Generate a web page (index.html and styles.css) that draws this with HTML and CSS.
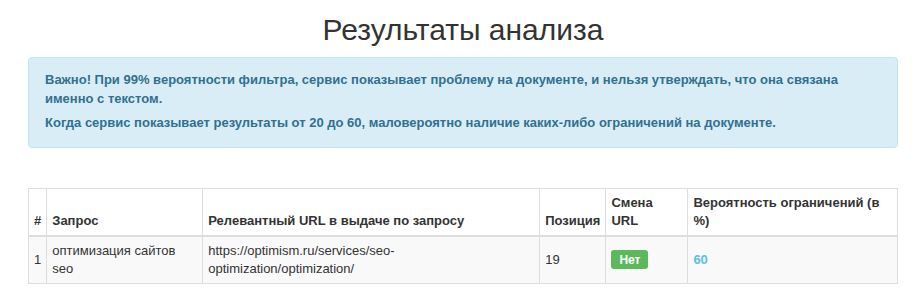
FILE: index.html
```html
<!DOCTYPE html>
<html lang="ru">
<head>
    <meta charset="utf-8">
    <title>Результаты анализа</title>
    <link rel="stylesheet" href="styles.css">
</head>
<body>
    <main class="container">
        <h1 class="page-title">Результаты анализа</h1>

        <div class="alert alert-info">
            <p>Важно! При 99% вероятности фильтра, сервис показывает проблему на документе, и нельзя утверждать, что она связана именно с текстом.</p>
            <p>Когда сервис показывает результаты от 20 до 60, маловероятно наличие каких-либо ограничений на документе.</p>
        </div>

        <table class="results">
            <thead>
                <tr>
                    <th class="col-num">#</th>
                    <th class="col-query">Запрос</th>
                    <th class="col-url">Релевантный URL в выдаче по запросу</th>
                    <th class="col-pos">Позиция</th>
                    <th class="col-change">Смена URL</th>
                    <th class="col-prob">Вероятность ограничений (в %)</th>
                </tr>
            </thead>
            <tbody>
                <tr>
                    <td class="row-num">1</td>
                    <td>оптимизация сайтов seo</td>
                    <td>https://optimism.ru/services/seo-optimization/optimization/</td>
                    <td>19</td>
                    <td><span class="label label-success">Нет</span></td>
                    <td class="prob">60</td>
                </tr>
            </tbody>
        </table>
    </main>
</body>
</html>
```

FILE: styles.css
```css
body {
    margin: 0;

    font-family: "Liberation Sans", Arial, sans-serif;
    font-size: 13px;
    line-height: 1.42857;
    color: #333;
    background-color: #fff;
}

.container {
    width: 870px;
    padding: 0 19px 0 28px;
}

.page-title {
    margin: 13px 0 11px 0;

    font-size: 30px;
    font-weight: 500;
    line-height: 33px;
    text-align: center;
}

.alert {
    margin-bottom: 40px;
    padding: 13px 16px 14px;

    border: 1px solid #bce8f1;
    border-radius: 4px;
}

.alert-info {
    color: #31708f;
    background-color: #d9edf7;
}

.alert p {
    margin: 0 0 6px 0;

    font-weight: bold;
}

.alert p:last-child {
    margin-bottom: 0;
}

.results {
    width: 100%;
    border-collapse: collapse;

    line-height: 18px;
}

.results th,
.results td {
    padding: 5px;

    border: 1px solid #ddd;
    text-align: left;
}

.results th {
    vertical-align: bottom;
    border-bottom: 2px solid #ddd;
}

.results td {
    vertical-align: middle;
}

.results tbody tr {
    background-color: #f9f9f9;
}

.col-num { width: 7px; }
.col-query { width: 145px; }
.col-url { width: 326px; }
.col-pos { width: 55px; }
.col-change { width: 71px; }

.prob {
    font-weight: bold;
    color: #5bc0de;
}

.label {
    display: inline-block;
    padding: 3px 8px 2px;

    font-size: 12px;
    font-weight: bold;
    line-height: 14px;
    color: #fff;
    border-radius: 3px;
}

.label-success {
    background-color: #5cb85c;
}
```
